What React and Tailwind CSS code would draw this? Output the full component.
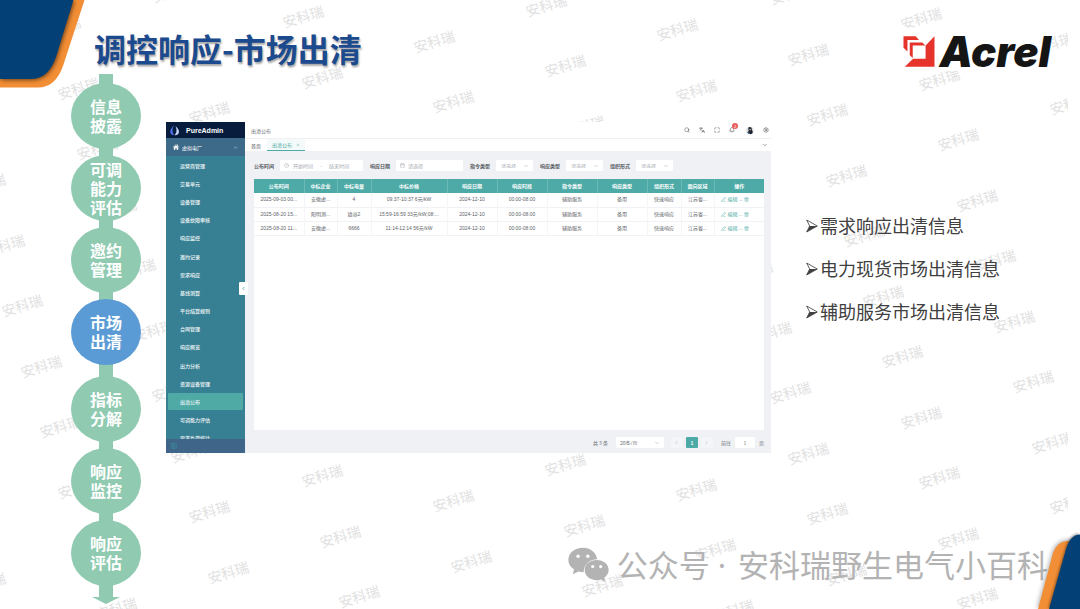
import React from "react";
import {
  Search,
  Maximize,
  Bell,
  Settings,
  ChevronDown,
  ChevronUp,
  ChevronLeft,
  ChevronRight,
  Clock,
  Calendar,
  X,
  PenLine,
  Trash2,
  Languages,
  PanelLeftClose,
} from "lucide-react";
import { IoHome } from "react-icons/io5";

const steps = [
  { lines: ["信息", "披露"] },
  { lines: ["可调", "能力", "评估"] },
  { lines: ["邀约", "管理"] },
  { lines: ["市场", "出清"], active: true },
  { lines: ["指标", "分解"] },
  { lines: ["响应", "监控"] },
  { lines: ["响应", "评估"] },
];

const menu = [
  "运营商管理",
  "交易单元",
  "设备管理",
  "设备故障审核",
  "响应监控",
  "邀约记录",
  "需求响应",
  "基线测算",
  "平台结算规则",
  "合同管理",
  "响应概览",
  "出力分析",
  "资源设备管理",
  "出清公布",
  "可调能力评估",
  "需求负荷统计",
];

const columns = [
  ["公布时间", 50],
  ["中标企业", 33],
  ["中标电量", 34],
  ["中标价格", 76],
  ["响应日期", 50],
  ["响应时段", 50],
  ["指令类型", 50],
  ["响应类型", 50],
  ["组织形式", 34],
  ["面向区域", 33],
  ["操作", 50],
];

const rows = [
  ["2025-09-03 00...", "安徽虚...", "4", "09:37-10:37 6元/kW", "2024-12-10", "00:00-08:00", "辅助服务", "备用", "快速响应", "江苏省..."],
  ["2025-08-20 15...", "阳明测...", "填谷2", "15:59-16:59 33元/kW;08:...", "2024-12-10", "00:00-08:00", "辅助服务", "备用", "快速响应", "江苏省..."],
  ["2025-08-20 11...", "安徽虚...", "6666", "11:14-12:14 56元/kW", "2024-12-10", "00:00-08:00", "辅助服务", "备用", "快速响应", "江苏省..."],
];

const notes = ["需求响应出清信息", "电力现货市场出清信息", "辅助服务市场出清信息"];

// Areas that the title and the console cover completely
const covered = [
  [110, 40, 350, 62],
  [188, 134, 750, 440],
];

function Watermarks() {
  const marks = [];
  for (let j = -6; j < 12; j++) {
    for (let i = -5; i < 9; i++) {
      const x = Math.round(303 + i * 131 + j * 18.7);
      const y = Math.round(16 + i * 24.6 + j * 60.5);
      const hidden = covered.some(([l, t, r, b]) => x > l && x < r && y > t && y < b);
      if (!hidden && x > -20 && x < 1086 && y > -12 && y < 620) marks.push([x, y]);
    }
  }
  return (
    <div aria-hidden="true" className="absolute inset-y-0 right-3 left-0 -z-10 overflow-hidden">
      {marks.map(([x, y]) => (
        <span
          key={x + "-" + y}
          className="absolute -translate-x-1/2 -translate-y-1/2 -rotate-[17deg] text-[14px] leading-none whitespace-nowrap text-[#e1e1e1]"
          style={{ left: x, top: y }}
        >
          安科瑞
        </span>
      ))}
    </div>
  );
}

function Corners() {
  return (
    <>
      <svg aria-hidden="true" className="absolute top-0 left-0 -z-10" width="96" height="96" viewBox="0 0 96 96">
        <path d="M0 0H84.500L63 66C58 80 50 87.500 38 87.500H0Z" fill="#f28e35" />
        <path
          className="drop-shadow-[1px_1px_2px_rgba(0,0,0,0.55)]"
          d="M0 0H73.500L56 57C51 71 44 79 30 79H0Z"
          fill="#034076"
        />
      </svg>
      <svg aria-hidden="true" className="absolute right-0 bottom-0" width="60" height="84" viewBox="0 0 60 84">
        <path
          className="drop-shadow-[-1px_-1px_2px_rgba(0,0,0,0.3)]"
          d="M18 84L33 28C36 20 41 16 48 16H60V84Z"
          fill="#f28e35"
        />
        <path
          className="drop-shadow-[-1px_-1px_1px_rgba(0,0,0,0.35)]"
          d="M29 84L46 24C49 14 54 9.500 60 9.500V84Z"
          fill="#034076"
        />
      </svg>
    </>
  );
}

function AcrelLogo() {
  return (
    <div className="flex gap-1 bg-white pt-2 pb-1">
      <svg aria-hidden="true" width="32" height="31" viewBox="0 0 96 94">
        <path d="M1 1H38L48 12H13V47L1 36Z" fill="#e6332c" />
        <path d="M20 20H58L67 29H29V67L20 58Z" fill="#e6332c" />
        <path d="M95 1V93H5L30 69H68V29Z" fill="#e6332c" />
      </svg>
      <span className="font-['Inter'] text-[42px] leading-[31px] font-black text-[#151515] italic">Acrel</span>
    </div>
  );
}

function Timeline() {
  return (
    <ol className="flex w-[70px] shrink-0 flex-col items-center">
      {steps.map((s, i) => (
        <li key={i} className="flex flex-col items-center">
          <span
            className={
              i === 0
                ? "-mb-px h-[10px] w-[14px] bg-[#8fcab1]"
                : i === 4
                  ? "-my-px h-[13px] w-[14px] bg-[#8fcab1]"
                  : "-my-px h-2 w-[14px] bg-[#8fcab1]"
            }
          />
          <span
            className={
              "relative flex h-[66px] w-[70px] flex-col items-center justify-center rounded-[50%] text-[16px] leading-[19px] font-bold text-white " +
              (s.active ? "bg-[#5b9bd5]" : "bg-[#8fcab1]")
            }
          >
            {s.lines.map((l) => (
              <span key={l}>{l}</span>
            ))}
          </span>
        </li>
      ))}
      <li aria-hidden="true">
        <svg className="-mt-px" width="28" height="19" viewBox="0 0 28 19">
          <path d="M7 0H21V12H28L14 19L0 12H7Z" fill="#8fcab1" />
        </svg>
      </li>
    </ol>
  );
}

function Sidebar() {
  return (
    <aside className="relative flex w-[79px] shrink-0 flex-col bg-[#377f93] text-white">
      <div className="flex h-4 items-center gap-[6px] bg-[#081c3e] pl-[3px]">
        <svg aria-hidden="true" width="11" height="12" viewBox="0 0 22 24">
          <path d="M10 2C6 8 1 12 3 18C4 21 7 22 10 22C6 17 6 11 10 2Z" fill="#4f74f0" />
          <path d="M13 4C18 9 22 14 19 19C17 22 14 23 11 22C16 18 16 12 13 4Z" fill="#c9d6f8" />
        </svg>
        <span className="font-['Liberation_Sans'] text-[7px] leading-none font-bold">PureAdmin</span>
      </div>
      <button type="button" className="flex h-[18px] items-center gap-[3px] bg-[#3d6a88] px-[7px] text-[5px]">
        <IoHome size={6} />
        虚拟电厂
        <ChevronUp size={5} className="ml-auto" />
      </button>
      <nav className="h-[283px] overflow-hidden">
        <ul className="grid h-[291px] grid-rows-[repeat(16,minmax(0,1fr))]">
          {menu.map((m) => (
            <li key={m} className="px-[2px] py-px">
              <a
                href="#"
                className={
                  "flex h-full items-center rounded-[1px] pl-3 text-[5px] leading-none font-medium text-[#f0f7f8] " +
                  (m === "出清公布" ? "bg-[#4faaa6]" : "")
                }
              >
                {m}
              </a>
            </li>
          ))}
        </ul>
      </nav>
      <div className="flex h-[14px] items-center bg-[#3f6688] pl-[5px] text-[#3f9fa5]">
        <PanelLeftClose size={6} />
      </div>
      <button
        type="button"
        aria-label="收起菜单"
        className="absolute top-[160px] -right-[3px] flex h-[13px] w-[9px] items-center justify-center rounded-[1px] bg-white text-[#4faaa6]"
      >
        <ChevronLeft size={5} strokeWidth={4} />
      </button>
    </aside>
  );
}

function SelectField({ id, label }) {
  return (
    <div className="flex items-center">
      <label htmlFor={id} className="w-[26px] font-bold text-[#555960]">
        {label}
      </label>
      <span className="relative flex items-center">
        <select
          id={id}
          className="h-[11px] w-[37px] appearance-none rounded-[1px] bg-white pl-[5px] text-[5px] text-[#a8abb2]"
        >
          <option>请选择</option>
        </select>
        <ChevronDown size={6} className="pointer-events-none absolute right-1 text-[#a8abb2]" />
      </span>
    </div>
  );
}

function Filters() {
  return (
    <form className="flex h-[11px] items-center gap-[7px]">
      <div className="flex items-center">
        <label htmlFor="start" className="w-[26px] font-bold text-[#555960]">
          公布时间
        </label>
        <span className="flex h-[11px] w-[83px] items-center rounded-[1px] bg-white pl-1 text-[#a8abb2]">
          <Clock size={5} />
          <input id="start" placeholder="开始时间" className="ml-1 w-6 placeholder:text-[#a8abb2]" />
          <span className="w-2 text-center">-</span>
          <input aria-label="结束时间" placeholder="结束时间" className="ml-1 w-6 placeholder:text-[#a8abb2]" />
        </span>
      </div>
      <div className="flex items-center">
        <label htmlFor="date" className="w-[26px] font-bold text-[#555960]">
          响应日期
        </label>
        <span className="flex h-[11px] w-[67px] items-center gap-[3px] rounded-[1px] bg-white pl-1 text-[#a8abb2]">
          <Calendar size={5} />
          <input id="date" placeholder="请选择" className="w-8 placeholder:text-[#a8abb2]" />
        </span>
      </div>
      <SelectField id="command" label="指令类型" />
      <SelectField id="response" label="响应类型" />
      <SelectField id="org" label="组织形式" />
    </form>
  );
}

function DataTable() {
  return (
    <table className="w-full table-fixed border-collapse text-center font-['Liberation_Sans','Noto_Sans_CJK_SC',sans-serif] text-[5px]">
      <colgroup>
        {columns.map(([name, w]) => (
          <col key={name} style={{ width: (w / 510) * 100 + "%" }} />
        ))}
      </colgroup>
      <thead>
        <tr className="h-[14px] bg-[#4daaa6] text-white">
          {columns.map(([name]) => (
            <th key={name} className="border-r border-[#6bbab6] p-0 font-bold last:border-r-0">
              {name}
            </th>
          ))}
        </tr>
      </thead>
      <tbody className="text-[#606369]">
        {rows.map((r) => (
          <tr key={r[0]} className="h-[14px] border-b border-[#f0f2f6]">
            {r.map((c, i) => (
              <td key={i} className="overflow-hidden border-r border-[#f3f5f8] p-0 whitespace-nowrap">
                {c}
              </td>
            ))}
            <td className="p-0">
              <div className="flex items-center gap-px pl-[6px] text-[#4daaa6]">
                <PenLine size={5} />
                <a href="#" className="ml-px">
                  编辑
                </a>
                <span>...</span>
                <Trash2 size={5} />
              </div>
            </td>
          </tr>
        ))}
      </tbody>
    </table>
  );
}

function Pagination() {
  return (
    <div className="flex h-[11px] items-center justify-end text-[#6b6e74]">
      <span className="mr-2">共 3 条</span>
      <span className="relative mr-[7px] flex items-center">
        <select
          aria-label="每页条数"
          className="h-[11px] w-12 appearance-none rounded-[1px] bg-white pl-1 text-[5px] text-[#6b6e74]"
        >
          <option>20条/页</option>
        </select>
        <ChevronDown size={6} className="pointer-events-none absolute right-1 text-[#a8abb2]" />
      </span>
      <div className="flex gap-[3px]">
        <button type="button" aria-label="上一页" className="flex h-[11px] w-3 items-center justify-center bg-[#f4f5f8] text-[#a8abb2]">
          <ChevronLeft size={5} />
        </button>
        <button type="button" className="h-[11px] w-3 rounded-[1px] bg-[#4daaa6] font-bold text-white">
          1
        </button>
        <button type="button" aria-label="下一页" className="flex h-[11px] w-3 items-center justify-center bg-[#f4f5f8] text-[#a8abb2]">
          <ChevronRight size={5} />
        </button>
      </div>
      <label htmlFor="page" className="mr-1 ml-2">
        前往
      </label>
      <input id="page" defaultValue="1" className="mr-1 h-[11px] w-5 rounded-[1px] bg-white text-center" />
      <span>页</span>
    </div>
  );
}

function AdminPanel() {
  return (
    <section className="flex min-w-0 flex-1 bg-[#eff1f5] text-[5px] leading-none">
      <Sidebar />
      <div className="flex min-w-0 flex-1 flex-col">
        <header className="flex h-[17px] items-center border-b border-[#f0f0f3] bg-white pr-[2px] pl-[6px] text-[#6b6e74]">
          <span>出清公布</span>
          <div className="ml-auto flex items-center gap-[9px] text-[#4a4d52]">
            <Search size={6} />
            <Languages size={6} />
            <Maximize size={6} />
            <span className="relative">
              <Bell size={6} />
              <span className="absolute -top-1 left-[3px] flex h-[6px] w-[6px] items-center justify-center rounded-full bg-[#ea5a5a] text-[4px] text-white">
                2
              </span>
            </span>
            <svg aria-hidden="true" className="ml-[2px]" width="8" height="9" viewBox="0 0 18 18">
              <circle cx="9" cy="9" r="8.500" fill="#d9dde2" />
              <path d="M5 3C8 0 13 1 13 6L15 12C16 16 12 18 8 17L3 14L6 10Z" fill="#20242c" />
              <path d="M8 5L11 6L10 9L8 8Z" fill="#e9dcd4" />
              <path d="M4 13L9 15L7 17L4 16Z" fill="#4e87b5" />
            </svg>
            <Settings size={6} />
          </div>
        </header>
        <div className="flex h-3 items-stretch bg-white pr-[3px] pl-[6px] text-[#4a4d52]">
          <a href="#" className="flex items-center">
            首页
          </a>
          <a href="#" className="ml-[6px] flex items-center gap-1 border-b border-[#4daaa6] bg-[#f3faf9] px-[5px] text-[#4daaa6]">
            出清公布
            <X size={4} />
          </a>
          <button type="button" aria-label="更多标签" className="ml-auto">
            <ChevronDown size={6} />
          </button>
        </div>
        <div className="flex flex-1 flex-col pt-[9px] pr-[7px] pb-[5px] pl-[9px]">
          <Filters />
          <div className="mt-2 mb-[7px] flex-1 bg-white">
            <DataTable />
          </div>
          <Pagination />
        </div>
      </div>
    </section>
  );
}

function Notes() {
  return (
    <ul className="mt-[82px] w-[309px] shrink-0 pl-[35px] text-[18px] leading-[43px] text-[#404040]">
      {notes.map((n) => (
        <li key={n} className="flex items-center gap-[2px] whitespace-nowrap">
          <svg aria-hidden="true" width="12" height="14" viewBox="0 0 36 42">
            <path d="M2 3L34 21L2 39L11 21Z" fill="none" stroke="#404040" strokeWidth="2.500" />
            <path d="M11 21H34L2 39Z" fill="#404040" />
          </svg>
          {n}
        </li>
      ))}
    </ul>
  );
}

function AccountCaption() {
  return (
    <p className="mt-[89px] mr-8 flex items-center justify-end gap-2 text-[31px] leading-[44px] whitespace-nowrap text-[#b3b3b3]">
      <svg aria-hidden="true" width="41" height="35" viewBox="0 0 118 100">
        <path
          d="M43 2C19 2 1 17 1 37C1 48 7 57 17 64L14 78L30 70C35 71 40 72 45 72C46 50 62 35 84 35C81 15 64 2 43 2Z"
          fill="#b3b3b3"
        />
        <path
          d="M83 37C63 37 48 49 48 66C48 83 63 95 83 95C87 95 91 94 95 93L107 99L104 88C112 83 117 75 117 66C117 49 102 37 83 37Z"
          fill="#b3b3b3"
        />
        <circle cx="29" cy="26" r="5" fill="#fff" />
        <circle cx="57" cy="26" r="5" fill="#fff" />
        <circle cx="71" cy="56" r="4.500" fill="#fff" />
        <circle cx="94" cy="56" r="4.500" fill="#fff" />
      </svg>
      <span>
        公众号<span className="mr-3 ml-2 font-['Noto_Sans']">·</span>安科瑞野生电气小百科
      </span>
    </p>
  );
}

export default function App() {
  return (
    <div lang="zh-CN" className="relative isolate min-h-screen overflow-hidden bg-white font-['Noto_Sans_CJK_SC',sans-serif]">
      <Watermarks />
      <Corners />
      <header className="flex h-[74px] items-start justify-between pt-7 pr-[29px] pl-[94px]">
        <h1 className="pt-px text-[32px] leading-[38px] font-bold text-[#1b4a8e] [text-shadow:1px_2px_2px_rgba(0,0,0,0.35)]">
          调控响应-市场出清
        </h1>
        <AcrelLogo />
      </header>
      <main className="flex items-start pl-[71px]">
        <Timeline />
        <div className="min-w-0 flex-1 pt-12 pl-[25px]">
          <div className="flex items-start">
            <AdminPanel />
            <Notes />
          </div>
          <AccountCaption />
        </div>
      </main>
    </div>
  );
}
